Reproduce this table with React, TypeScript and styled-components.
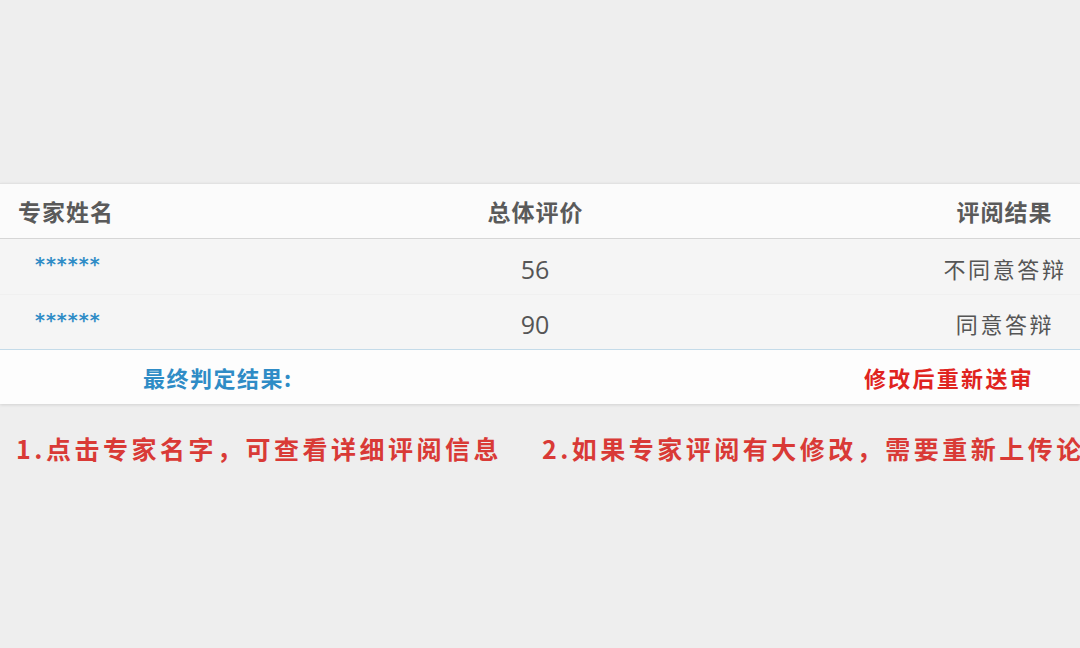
import React from "react";
import styled, { createGlobalStyle } from "styled-components";

const Global = createGlobalStyle`
  html, body { margin: 0; padding: 0; background: #eeeeee; }
  body { font-family: "Noto Sans CJK SC", "Noto Sans", sans-serif; overflow: hidden; }
`;

const Page = styled.div`
  width: 1080px;
  height: 648px;
  background: #eeeeee;
  padding-top: 183px;
  box-sizing: border-box;
  overflow: hidden;
`;

const Panel = styled.div`
  width: 1080px;
  background: #f6f6f6;
  border-top: 1px solid #e2e2e2;
  box-shadow: 0 1px 3px rgba(0, 0, 0, 0.12);
`;

const Row = styled.div<{ $bg: string; $border: string; $h: number }>`
  display: grid;
  grid-template-columns: 390px 290px 400px;
  align-items: center;
  height: ${(p) => p.$h}px;
  background: ${(p) => p.$bg};
  border-bottom: 1px solid ${(p) => p.$border};
  box-sizing: border-box;
`;

const HeadCell = styled.div<{ $align: "left" | "center" | "end" }>`
  font-size: 23px;
  font-weight: 700;
  color: #5a5a5a;
  letter-spacing: 1px;
  white-space: nowrap;
  ${(p) =>
    p.$align === "left"
      ? "padding-left: 18px;"
      : p.$align === "center"
      ? "text-align: center; padding-left: 1px;"
      : "justify-self: end; width: 152px; text-align: center; padding-left: 1px; box-sizing: border-box;"}
`;

const Stars = styled.a`
  padding-left: 35px;
  font-size: 19px;
  font-weight: 700;
  color: #2f8cc6;
  letter-spacing: 1px;
  align-self: start;
  margin-top: 14px;
  text-decoration: none;
  font-family: "DejaVu Sans", sans-serif;
`;

const Score = styled.div`
  text-align: center;
  font-size: 25px;
  font-family: "Open Sans", "Noto Sans", sans-serif;
  color: #555555;
  margin-top: 4px;
`;

const Result = styled.div`
  justify-self: end;
  width: 152px;
  text-align: center;
  font-size: 22px;
  color: #555555;
  letter-spacing: 2.6px;
  padding-left: 2px;
  box-sizing: border-box;
  white-space: nowrap;
  margin-top: 2px;
`;

const FinalRow = styled.div`
  display: flex;
  align-items: center;
  height: 55px;
  background: #fdfdfd;
  border-top: 1px solid #c4dbe9;
  box-sizing: border-box;
`;

const FinalLabel = styled.div`
  margin-left: 143px;
  font-size: 22px;
  font-weight: 700;
  color: #2f8cc6;
  letter-spacing: 1.5px;
  white-space: nowrap;
`;

const FinalValue = styled.div`
  margin-left: auto;
  margin-right: 46px;
  font-size: 22px;
  font-weight: 700;
  color: #e0241f;
  letter-spacing: 2.3px;
  white-space: nowrap;
`;

const Notes = styled.div`
  display: flex;
  gap: 40px;
  margin-top: 26px;
  padding-left: 16px;
  white-space: nowrap;
`;

const Note = styled.div`
  font-size: 25px;
  font-weight: 700;
  color: #d93a36;
  letter-spacing: 3.5px;
`;

const rows = [
  { score: "56", result: "不同意答辩" },
  { score: "90", result: "同意答辩" },
];

export default function App() {
  return (
    <>
      <Global />
      <Page>
        <Panel>
          <Row $bg="#fbfbfb" $border="#d6d6d6" $h={55}>
            <HeadCell $align="left">专家姓名</HeadCell>
            <HeadCell $align="center">总体评价</HeadCell>
            <HeadCell $align="end">评阅结果</HeadCell>
          </Row>
          {rows.map((r, i) => (
            <Row key={i} $bg="#f5f5f5" $border={i === 0 ? "#f0f0f0" : "#f5f5f5"} $h={i === 0 ? 56 : 54}>
              <Stars href="#">******</Stars>
              <Score>{r.score}</Score>
              <Result>{r.result}</Result>
            </Row>
          ))}
          <FinalRow>
            <FinalLabel>最终判定结果:</FinalLabel>
            <FinalValue>修改后重新送审</FinalValue>
          </FinalRow>
        </Panel>
        <Notes>
          <Note>1.点击专家名字，可查看详细评阅信息</Note>
          <Note>2.如果专家评阅有大修改，需要重新上传论文</Note>
        </Notes>
      </Page>
    </>
  );
}
